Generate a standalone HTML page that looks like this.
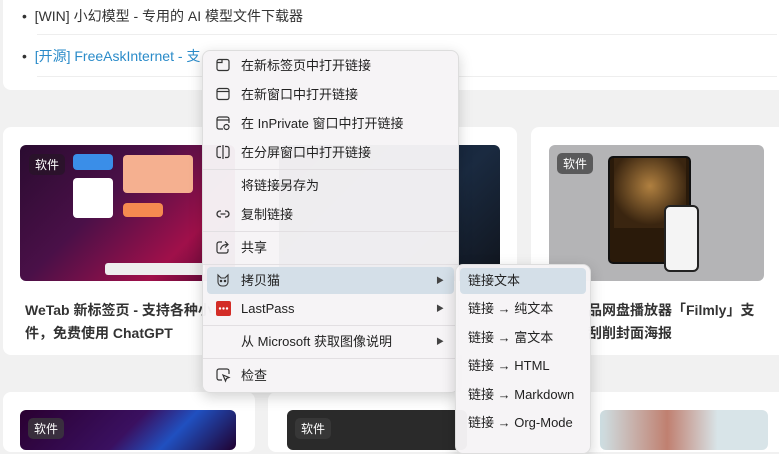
<!DOCTYPE html>
<html><head><meta charset="utf-8"><style>
*{box-sizing:border-box;margin:0;padding:0}
body{width:779px;height:435px;overflow:hidden;background:#f1f1f1;font-family:"Liberation Sans","Noto Sans CJK SC",sans-serif;position:relative;color:#222}
.abs{position:absolute}
.card{position:absolute;background:#fff;border-radius:8px}
.img{position:absolute;border-radius:6px;overflow:hidden}
.tag{position:absolute;left:8px;top:8px;background:rgba(60,60,60,.75);color:#fff;font-size:12px;padding:2px 6px;border-radius:5px}
.title{position:absolute;font-weight:bold;font-size:14px;line-height:23px;color:#333}
.menu{position:absolute;background:rgba(246,244,246,.97);border-radius:8px;box-shadow:0 4px 14px rgba(0,0,0,.18);border:1px solid #ddd}
.it{position:absolute;left:4px;right:4px;height:27px;font-size:13px;color:#222;line-height:27px;padding-left:34px;border-radius:4px}
.it svg{position:absolute;left:9px;top:6px}
.sep{position:absolute;left:0;right:0;height:1px;background:#e2dfe2}
.arr{position:absolute;right:10px;top:0;font-size:8px;color:#444}
.sit{position:absolute;left:4px;right:4px;height:26px;font-size:13px;line-height:26px;padding-left:8px;border-radius:4px;color:#222}
</style></head><body>
<div class="card" style="left:3px;top:-10px;width:790px;height:100px"></div>
<div class="abs" style="left:22px;top:6px;font-size:14px;color:#333">•&nbsp;&nbsp;[WIN] 小幻模型 - 专用的 AI 模型文件下载器</div>
<div class="abs" style="left:37px;top:34px;width:740px;height:1px;background:#eee"></div>
<div class="abs" style="left:22px;top:46px;font-size:14px;color:#333">•&nbsp;&nbsp;<span style="color:#2a8bc9">[开源] FreeAskInternet - 支</span></div>
<div class="abs" style="left:37px;top:76px;width:740px;height:1px;background:#eee"></div>

<div class="card" style="left:3px;top:127px;width:245px;height:228px"></div>
<div class="img" style="left:20px;top:145px;width:215px;height:136px;background:linear-gradient(135deg,#2a0b30 0%,#4a1048 40%,#a0104a 75%,#4a0830 100%)">
 <div class="abs" style="left:53px;top:33px;width:40px;height:40px;background:#fff;border-radius:4px"></div>
 <div class="abs" style="left:103px;top:10px;width:70px;height:38px;background:#f5b090;border-radius:4px"></div>
 <div class="abs" style="left:53px;top:9px;width:40px;height:16px;background:#3a8ee8;border-radius:4px"></div>
 <div class="abs" style="left:103px;top:58px;width:40px;height:14px;background:#f58a50;border-radius:4px"></div>
 <div class="abs" style="left:85px;top:118px;width:100px;height:12px;background:#eee;border-radius:3px"></div>
 <div class="tag" style="left:9px;top:9px;background:rgba(40,20,40,.8)">软件</div></div>
<div class="title" style="left:25px;top:299px">WeTab 新标签页 - 支持各种小<br>件，免费使用 ChatGPT</div>

<div class="card" style="left:262px;top:127px;width:255px;height:228px"></div>
<div class="img" style="left:279px;top:145px;width:221px;height:136px;background:linear-gradient(135deg,#0a1830,#1a2a40 60%,#10141c)"></div>

<div class="card" style="left:531px;top:127px;width:260px;height:228px"></div>
<div class="img" style="left:549px;top:145px;width:215px;height:136px;background:#b4b4b6">
 <div class="abs" style="left:59px;top:11px;width:83px;height:108px;background:#2a1a0a;border:2px solid #111;border-radius:5px"></div>
 <div class="abs" style="left:65px;top:13px;width:72px;height:70px;background:radial-gradient(circle at 50% 40%,#b08040,#3a2510 70%)"></div>
 <div class="abs" style="left:115px;top:60px;width:35px;height:67px;background:#f4f4f4;border:2px solid #222;border-radius:6px"></div>
 <div class="tag">软件</div></div>
<div class="title" style="left:588px;top:299px">品网盘播放器「Filmly」支<br>刮削封面海报</div>

<div class="card" style="left:3px;top:392px;width:252px;height:60px"></div>
<div class="img" style="left:20px;top:410px;width:216px;height:40px;background:linear-gradient(135deg,#2a0030,#3a1060 50%,#2050c0 70%,#200030)"><div class="tag" style="left:8px;top:8px">软件</div></div>
<div class="card" style="left:268px;top:392px;width:520px;height:60px"></div>
<div class="img" style="left:287px;top:410px;width:180px;height:40px;background:#2a2a2a"><div class="tag" style="left:8px;top:8px">软件</div></div>
<div class="img" style="left:600px;top:410px;width:168px;height:40px;background:linear-gradient(90deg,#cfe0e4,#c08070 40%,#d8e4e8 70%)"></div>

<div class="menu" style="left:202px;top:50px;width:257px;height:343px">
 <div class="it" style="top:1px"><svg width="14" height="14" fill="none" stroke="#333" stroke-width="1.2"><rect x="1" y="1.5" width="12" height="11" rx="2"/><path d="M1 4.5h5V1.5"/></svg>在新标签页中打开链接</div>
 <div class="it" style="top:30px"><svg width="14" height="14" fill="none" stroke="#333" stroke-width="1.2"><rect x="1" y="1.5" width="12" height="11" rx="2"/><path d="M1 4.5h12"/></svg>在新窗口中打开链接</div>
 <div class="it" style="top:59px"><svg width="14" height="15" fill="none" stroke="#333" stroke-width="1.2"><path d="M7 13H3a2 2 0 0 1-2-2V3a2 2 0 0 1 2-2h8a2 2 0 0 1 2 2v4M1 4h12"/><circle cx="10.5" cy="11" r="2.5"/></svg>在 InPrivate 窗口中打开链接</div>
 <div class="it" style="top:88px"><svg width="14" height="14" fill="none" stroke="#333" stroke-width="1.2"><path d="M5 1.5H3a2 2 0 0 0-2 2v7a2 2 0 0 0 2 2h2M9 1.5h2a2 2 0 0 1 2 2v7a2 2 0 0 1-2 2H9M7 0v14"/></svg>在分屏窗口中打开链接</div>
 <div class="sep" style="top:118px"></div>
 <div class="it" style="top:121px">将链接另存为</div>
 <div class="it" style="top:150px"><svg width="14" height="14" fill="none" stroke="#333" stroke-width="1.3"><path d="M5 4H4a3 3 0 0 0 0 6h1M9 4h1a3 3 0 0 1 0 6H9M4.5 7h5"/></svg>复制链接</div>
 <div class="sep" style="top:180px"></div>
 <div class="it" style="top:183px"><svg width="14" height="14" fill="none" stroke="#333" stroke-width="1.2"><path d="M6 2H3a2 2 0 0 0-2 2v7a2 2 0 0 0 2 2h7a2 2 0 0 0 2-2V9M4.5 9.5c1-4 3.5-5 7-5M9 1.5l3 3-3 3"/></svg>共享</div>
 <div class="sep" style="top:213px"></div>
 <div class="it" style="top:216px;background:#d4dfe8"><svg width="14" height="14" fill="none" stroke="#333" stroke-width="1.1"><path d="M2 2l3 3h4l3-3v7a4 4 0 0 1-4 4H6a4 4 0 0 1-4-4z"/><circle cx="5" cy="8" r=".7" fill="#333"/><circle cx="9" cy="8" r=".7" fill="#333"/></svg>拷贝猫<span class="arr">▶</span></div>
 <div class="it" style="top:244px"><svg width="15" height="15"><rect x="0" y="0" width="15" height="15" rx="2" fill="#d32d27"/><circle cx="4" cy="7.5" r="1.2" fill="#fff"/><circle cx="7.5" cy="7.5" r="1.2" fill="#fff"/><circle cx="11" cy="7.5" r="1.2" fill="#fff"/></svg>LastPass<span class="arr">▶</span></div>
 <div class="sep" style="top:274px"></div>
 <div class="it" style="top:277px">从 Microsoft 获取图像说明<span class="arr">▶</span></div>
 <div class="sep" style="top:307px"></div>
 <div class="it" style="top:311px"><svg width="15" height="15" fill="none" stroke="#333" stroke-width="1.2"><path d="M6 12H3a2 2 0 0 1-2-2V3a2 2 0 0 1 2-2h8a2 2 0 0 1 2 2v3"/><path d="M7 7l6 2.5-2.5 1-1 2.5z"/></svg>检查</div>
</div>

<div class="menu" style="left:455px;top:264px;width:136px;height:190px">
 <div class="sit" style="top:3px;background:#d4dfe8">链接文本</div>
 <div class="sit" style="top:31px">链接 <span style="font-family:'Liberation Sans'">→</span> 纯文本</div>
 <div class="sit" style="top:60px">链接 <span style="font-family:'Liberation Sans'">→</span> 富文本</div>
 <div class="sit" style="top:88px">链接 <span style="font-family:'Liberation Sans'">→</span> HTML</div>
 <div class="sit" style="top:117px">链接 <span style="font-family:'Liberation Sans'">→</span> Markdown</div>
 <div class="sit" style="top:145px">链接 <span style="font-family:'Liberation Sans'">→</span> Org-Mode</div>
</div>
</body></html>
